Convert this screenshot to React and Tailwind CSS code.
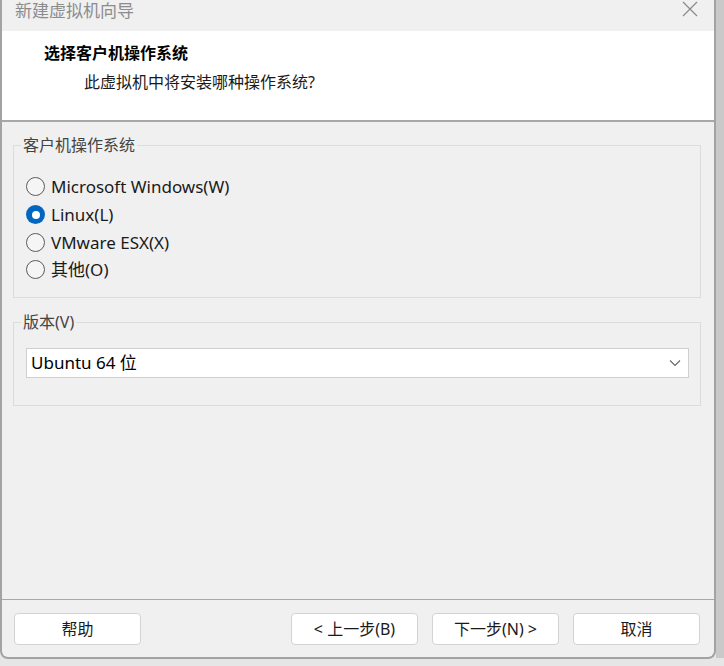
import React from "react";

const cjk = { fontFamily: '"Noto Sans", "Noto Sans CJK SC", sans-serif' };

function Radio({ checked, label }) {
  return (
    <div className="flex items-center h-[27.7px]">
      {checked ? (
        <div className="w-[19px] h-[19px] rounded-full bg-[#0067c0] flex items-center justify-center">
          <div className="w-[8px] h-[8px] rounded-full bg-white" />
        </div>
      ) : (
        <div className="w-[19px] h-[19px] rounded-full border border-[#5a5a5a] bg-[#f5f5f5]" />
      )}
      <span className="ml-[6px] text-[17px] text-[#1a1a1a] leading-none">{label}</span>
    </div>
  );
}

function Btn({ children }) {
  return (
    <div className="w-[127px] h-[32px] rounded-[4px] border border-[#d3d3d3] bg-white flex items-center justify-center text-[16px] text-[#1a1a1a]">
      {children}
    </div>
  );
}

export default function App() {
  return (
    <div className="w-[724px] h-[666px] bg-[#e6e6e6] flex overflow-hidden" style={cjk}>
      <div className="flex flex-col w-[716px] h-[659px]">
        <div className="w-[716px] h-[659px] bg-[#f0f0f0] border-l-2 border-r-2 border-b-2 border-[#a3a3a3] rounded-bl-[8px] rounded-br-[8px] flex flex-col">
          {/* title bar */}
          <div className="h-[31px] flex items-start justify-between bg-[#f0f0f0]">
            <span className="ml-[13px] mt-[-2px] text-[17px] text-[#8c8c8c]">新建虚拟机向导</span>
            <svg width="16" height="16" viewBox="0 0 16 16" className="mr-[16px] mt-[1px]">
              <path d="M1 1 L15 15 M15 1 L1 15" stroke="#8a8a8a" strokeWidth="1.2" />
            </svg>
          </div>
          {/* header */}
          <div className="h-[91px] bg-white border-b-2 border-[#a8a8a8] flex flex-col">
            <div className="ml-[42px] mt-[11px] text-[16px] font-bold text-black leading-[22px]">选择客户机操作系统</div>
            <div className="ml-[82px] mt-[7px] text-[16px] text-[#1a1a1a] leading-[22px]">此虚拟机中将安装哪种操作系统?</div>
          </div>
          {/* content */}
          <div className="flex-1 flex flex-col pl-[11px] pr-[13px]">
            <fieldset className="mt-[12px] h-[164px] border border-[#dcdcdc] px-[12px] pt-[17px]">
              <legend className="ml-[-5px] px-[2px] text-[16px] text-[#444] leading-[22px]">客户机操作系统</legend>
              <div className="flex flex-col">
                <Radio label="Microsoft Windows(W)" />
                <Radio checked label="Linux(L)" />
                <Radio label="VMware ESX(X)" />
                <Radio label="其他(O)" />
              </div>
            </fieldset>
            <fieldset className="mt-[14px] h-[94px] border border-[#dcdcdc] pl-[12px] pr-[11px] pt-[16px]">
              <legend className="ml-[-5px] px-[2px] text-[16px] text-[#444] leading-[20px]">版本(V)</legend>
              <div className="h-[30px] bg-white border border-[#cfcfcf] flex items-center justify-between pl-[4px] pr-[7px]">
                <span className="text-[17px] text-black">Ubuntu 64 位</span>
                <svg width="12" height="8" viewBox="0 0 12 8">
                  <path d="M1 1.5 L6 6.5 L11 1.5" stroke="#666" strokeWidth="1.1" fill="none" />
                </svg>
              </div>
            </fieldset>
            <div className="flex-1" />
          </div>
          {/* footer */}
          <div className="h-[58px] border-t border-[#a8a8a8] flex items-start pt-[13px] pl-[12px] pr-[14px]">
            <Btn>帮助</Btn>
            <div className="flex-1" />
            <div className="flex gap-[14px]">
              <Btn>&lt; 上一步(B)</Btn>
              <Btn>下一步(N) &gt;</Btn>
              <Btn>取消</Btn>
            </div>
          </div>
        </div>
      </div>
      <div className="w-[8px] h-[658px] bg-[#c9c9c9]" />
    </div>
  );
}
